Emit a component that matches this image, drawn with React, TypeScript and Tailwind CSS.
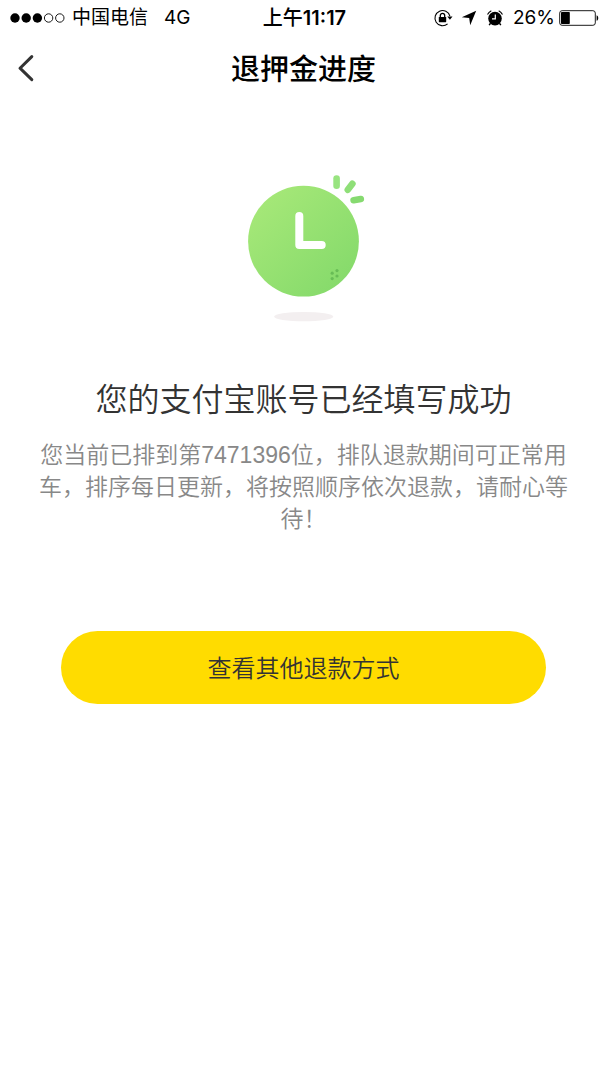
function SignalDots() {
  return (
    <svg className="h-3 w-14" viewBox="0 0 56 12" aria-hidden="true">
      <circle cx="5" cy="6" r="4.7" />
      <circle cx="16.2" cy="6" r="4.7" />
      <circle cx="27.4" cy="6" r="4.7" />
      <circle cx="38.6" cy="6" r="4.2" fill="none" stroke="black" strokeWidth="0.9" />
      <circle cx="49.8" cy="6" r="4.2" fill="none" stroke="black" strokeWidth="0.9" />
    </svg>
  );
}

function RotationLockIcon() {
  return (
    <svg className="h-5 w-5" viewBox="0 0 20 20" aria-hidden="true">
      <path
        d="M16.9 8.2A7.6 7.6 0 1 0 14.6 15.8"
        fill="none"
        stroke="black"
        strokeWidth="1.1"
      />
      <path d="M14.3 8.6h5.2l-2.6 3.2z" />
      <rect x="5.8" y="9" width="7.4" height="5.2" rx="0.6" />
      <path d="M7.3 9.4V7.6a2.2 2.2 0 0 1 4.4 0v1.8" fill="none" stroke="black" strokeWidth="1.3" />
    </svg>
  );
}

function LocationIcon() {
  return (
    <svg className="h-4 w-4" viewBox="0 0 16 16" aria-hidden="true">
      <path d="M15.2 0.8L9.2 15.2L8.2 8L0.8 7.2z" />
    </svg>
  );
}

function AlarmIcon() {
  return (
    <svg className="h-4 w-4" viewBox="0 0 16 16" aria-hidden="true">
      <circle cx="8" cy="8.6" r="6.8" />
      <path d="M0.5 4.4A8.6 8.6 0 0 1 4.3 0.7M15.5 4.4A8.6 8.6 0 0 0 11.7 0.7" fill="none" stroke="black" strokeWidth="1.1" />
      <path d="M3.4 13.4L2.2 15.2M12.6 13.4L13.8 15.2" stroke="black" strokeWidth="1.5" />
      <path d="M8.3 4.6V8.8H5" fill="none" stroke="white" strokeWidth="1.2" />
    </svg>
  );
}

function BatteryIcon() {
  return (
    <svg className="h-4 w-10" viewBox="0 0 40 16" aria-hidden="true">
      <rect x="0.7" y="0.7" width="35.6" height="14.6" rx="2.4" fill="none" stroke="black" strokeWidth="0.9" />
      <rect x="2" y="2" width="8.8" height="12" rx="0.8" />
      <path d="M37.6 5.2c2.2 0.8 2.2 4.8 0 5.6z" />
    </svg>
  );
}

function StatusBar() {
  return (
    <div className="grid h-8 grid-cols-[1fr_auto_1fr] items-center pt-0.5 pr-2 pl-2.5 font-['Inter','Noto_Sans_CJK_SC',sans-serif] text-[19px] leading-8 text-black">
      <div className="flex items-center">
        <SignalDots />
        <span className="ml-1.5">中国电信</span>
        <span className="ml-4">4G</span>
      </div>
      <div className="text-xl leading-8 font-medium">
        上午<span className="font-semibold">11:17</span>
      </div>
      <div className="flex items-center justify-end">
        <RotationLockIcon />
        <span className="ml-2">
          <LocationIcon />
        </span>
        <span className="mr-2.5 ml-2.5">
          <AlarmIcon />
        </span>
        <span className="mr-1">26%</span>
        <BatteryIcon />
      </div>
    </div>
  );
}

function NavBar() {
  return (
    <header className="grid h-18 grid-cols-[1fr_auto_1fr] items-center px-4">
      <button type="button" aria-label="返回" className="w-6 cursor-pointer">
        <svg className="h-7 w-5" viewBox="0 0 20 28" fill="none" aria-hidden="true">
          <path
            d="M15.8 2.6L4 14.2L15.8 25.6"
            stroke="#333333"
            strokeWidth="3"
            strokeLinecap="round"
            strokeLinejoin="round"
          />
        </svg>
      </button>
      <h1 className="pt-1 text-[29px] leading-10 font-medium text-black">退押金进度</h1>
    </header>
  );
}

function ClockIllustration() {
  return (
    <svg className="h-[165px] w-[141px]" viewBox="0 0 141 165" fill="none" aria-hidden="true">
      <defs>
        <linearGradient id="face" x1="0" y1="0" x2="1" y2="1">
          <stop offset="0.1" stopColor="#a6e878" />
          <stop offset="0.9" stopColor="#85da6b" />
        </linearGradient>
      </defs>
      <circle cx="70.5" cy="76.2" r="55.4" fill="url(#face)" />
      <path
        d="M66.3 51V80H88.7"
        stroke="white"
        strokeWidth="8"
        strokeLinecap="round"
        strokeLinejoin="round"
      />
      <g strokeWidth="6.6" strokeLinecap="round">
        <path d="M103.6 13.6V20.8" stroke="#98e480" />
        <path d="M119.4 18.8L114.8 24.8" stroke="#8fdf78" />
        <path d="M120.6 35.2L127.8 34" stroke="#86da70" />
      </g>
      <g fill="#68bd56">
        <circle cx="104" cy="105.6" r="1.6" />
        <circle cx="99.2" cy="108.2" r="1.6" />
        <circle cx="104" cy="111" r="1.6" />
        <circle cx="99.2" cy="113.6" r="1.6" />
      </g>
      <ellipse cx="70.7" cy="151.6" rx="29.6" ry="4.7" fill="#f3eff0" />
    </svg>
  );
}

export default function App() {
  return (
    <div className="min-h-screen bg-white font-['Liberation_Sans','Noto_Sans_CJK_SC',sans-serif]">
      <StatusBar />
      <NavBar />
      <main className="flex flex-col items-center px-8 pt-[61px]">
        <ClockIllustration />
        <h2 className="mt-[46px] text-center text-[32px] leading-12 font-[350] text-[#333333]">
          您的支付宝账号已经填写成功
        </h2>
        <p className="mt-[15px] text-center text-[23px] leading-8 font-[350] text-[#888888]">
          您当前已排到第7471396位，排队退款期间可正常用车，排序每日更新，将按照顺序依次退款，请耐心等待！
        </p>
        <div className="mt-24 w-full px-[29px]">
          <button
            type="button"
            className="h-[73px] w-full cursor-pointer rounded-full bg-[#ffdc00] pt-0.5 text-2xl font-[350] text-[#333333]"
          >
            查看其他退款方式
          </button>
        </div>
      </main>
    </div>
  );
}
